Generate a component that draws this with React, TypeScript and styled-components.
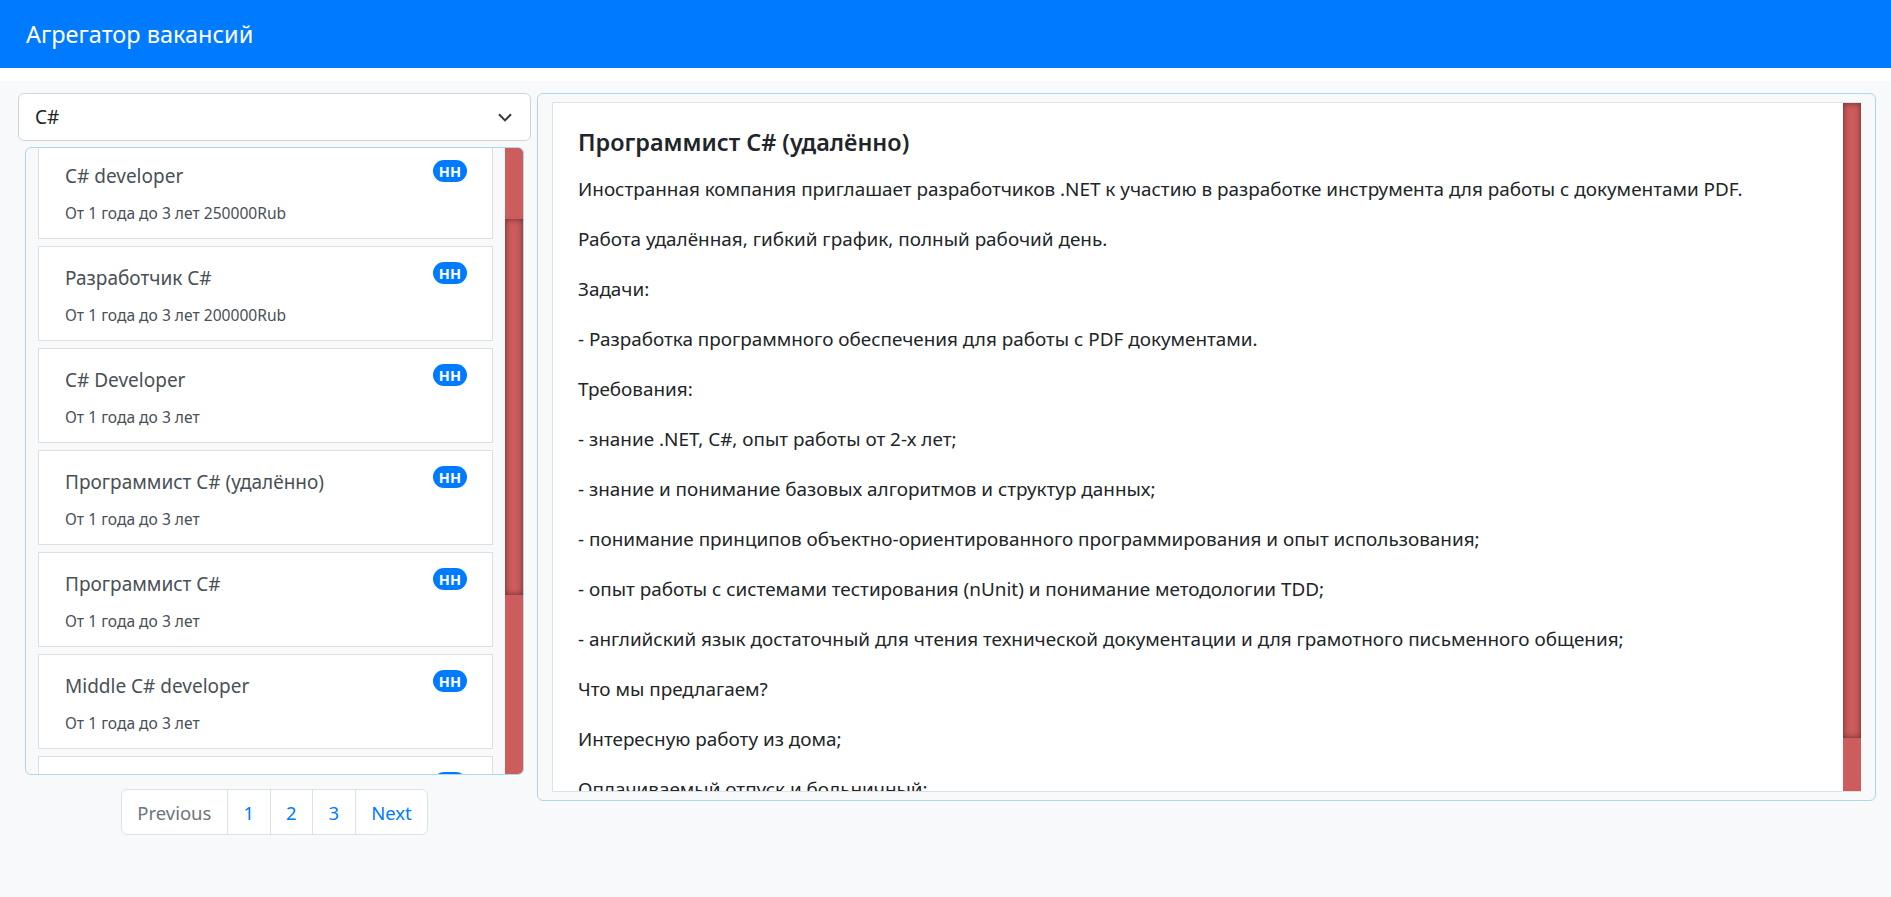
import React, { useEffect, useRef } from 'react';
import styled, { createGlobalStyle } from 'styled-components';

interface Vacancy {
  name: string;
  details: string;
}

const vacancies: Vacancy[] = [
  { name: 'Senior C# developer', details: 'От 3 до 6 лет 300000Rub' },
  { name: 'C# developer', details: 'От 1 года до 3 лет 250000Rub' },
  { name: 'Разработчик C#', details: 'От 1 года до 3 лет 200000Rub' },
  { name: 'C# Developer', details: 'От 1 года до 3 лет' },
  { name: 'Программист C# (удалённо)', details: 'От 1 года до 3 лет' },
  { name: 'Программист C#', details: 'От 1 года до 3 лет' },
  { name: 'Middle C# developer', details: 'От 1 года до 3 лет' },
  { name: '.NET разработчик', details: 'От 1 года до 3 лет' },
  { name: 'Backend C# developer', details: 'От 1 года до 3 лет' },
  { name: 'Junior C# developer', details: 'Нет опыта' },
];

const description: string[] = [
  'Иностранная компания приглашает разработчиков .NET к участию в разработке инструмента для работы с документами PDF.',
  'Работа удалённая, гибкий график, полный рабочий день.',
  'Задачи:',
  '- Разработка программного обеспечения для работы с PDF документами.',
  'Требования:',
  '- знание .NET, C#, опыт работы от 2-х лет;',
  '- знание и понимание базовых алгоритмов и структур данных;',
  '- понимание принципов объектно-ориентированного программирования и опыт использования;',
  '- опыт работы с системами тестирования (nUnit) и понимание методологии TDD;',
  '- английский язык достаточный для чтения технической документации и для грамотного письменного общения;',
  'Что мы предлагаем?',
  'Интересную работу из дома;',
  'Оплачиваемый отпуск и больничный;',
  'Возможность профессионального роста.',
];

const pages = ['Previous', '1', '2', '3', 'Next'];

const App = () => {
  const listRef = useRef<HTMLDivElement>(null);

  useEffect(() => {
    // the list is shown scrolled down by a bit more than one card
    if (listRef.current) listRef.current.scrollTop = 114;
  }, []);

  return (
    <>
      <GlobalStyle />
      <Navbar>
        <Brand>Агрегатор вакансий</Brand>
      </Navbar>
      <Main>
        <LeftColumn>
          <Select>
            <SelectText>C#</SelectText>
            <svg width="14" height="9" viewBox="0 0 14 9">
              <path d="M1 1.2 L7 7.4 L13 1.2" fill="none" stroke="#343a40" strokeWidth="2" />
            </svg>
          </Select>
          <List>
            <ListViewport ref={listRef}>
              {vacancies.map((v, i) => (
                <Card key={i}>
                  <CardHeader>
                    <CardTitle>{v.name}</CardTitle>
                    <Badge>HH</Badge>
                  </CardHeader>
                  <CardDetails>{v.details}</CardDetails>
                </Card>
              ))}
            </ListViewport>
            <ScrollTrack>
              <ScrollThumb $offset={71} $size={376} />
            </ScrollTrack>
          </List>
          <Pager>
            {pages.map((p, i) => (
              <PageItem key={p} $muted={p === 'Previous'} $first={i === 0} $last={i === pages.length - 1}>
                {p}
              </PageItem>
            ))}
          </Pager>
        </LeftColumn>
        <DetailsOuter>
          <DetailsCard>
            <DetailsBody>
              <DetailsTitle>Программист C# (удалённо)</DetailsTitle>
              {description.map((line, i) => (
                <Paragraph key={i}>{line}</Paragraph>
              ))}
            </DetailsBody>
            <ScrollTrack>
              <ScrollThumb $offset={0} $size={635} />
            </ScrollTrack>
          </DetailsCard>
        </DetailsOuter>
      </Main>
    </>
  );
};

const GlobalStyle = createGlobalStyle`
  html, body {
    margin: 0;
    padding: 0;
    background: #fff;
    font-family: "Noto Sans", "Open Sans", sans-serif;
  }
`;

const Navbar = styled.header`
  height: 68px;
  background: #007bff;
  display: flex;
  align-items: center;
  padding: 0 26px;
`;

const Brand = styled.div`
  color: #fff;
  font-size: 23.5px;
`;

const Main = styled.main`
  margin-top: 13px;
  background: #f8f9fa;
  min-height: calc(100vh - 81px);
  box-sizing: border-box;
  padding: 12px 15px 0 18px;
  display: flex;
  gap: 6px;
  align-items: flex-start;
`;

const LeftColumn = styled.div`
  width: 513px;
  flex-shrink: 0;
  display: flex;
  flex-direction: column;
`;

const Select = styled.div`
  height: 48px;
  box-sizing: border-box;
  border: 1px solid #ced4da;
  border-radius: 6px;
  background: #fff;
  display: flex;
  align-items: center;
  justify-content: space-between;
  padding: 0 18px 0 16px;
`;

const SelectText = styled.span`
  font-size: 19px;
  color: #212529;
`;

const List = styled.div`
  margin: 6px 7px 0;
  height: 628px;
  box-sizing: border-box;
  border: 1px solid #add8e6;
  border-radius: 6px;
  overflow: hidden;
  display: flex;
`;

const ListViewport = styled.div`
  flex: 1;
  overflow: hidden;
  padding: 8px 12px;
  display: flex;
  flex-direction: column;
  gap: 7px;
`;

const ScrollTrack = styled.div`
  width: 18px;
  flex-shrink: 0;
  background: #cd5c5c;
  display: flex;
  flex-direction: column;
`;

const ScrollThumb = styled.div<{ $offset: number; $size: number }>`
  margin-top: ${({ $offset }) => $offset}px;
  height: ${({ $size }) => $size}px;
  background: #cd5c5c;
  box-shadow: inset 0 0 6px rgba(0, 0, 0, 0.55);
`;

const Card = styled.div`
  flex-shrink: 0;
  height: 95px;
  box-sizing: border-box;
  background: #fff;
  border: 1px solid #dfdfdf;
  padding: 15px 25px 0 26px;
`;

const CardHeader = styled.div`
  display: flex;
  justify-content: space-between;
  align-items: flex-start;
`;

const CardTitle = styled.div`
  font-size: 19px;
  line-height: 32px;
  color: #495057;
`;

const Badge = styled.span`
  background: #007bff;
  color: #fff;
  font-size: 14.5px;
  font-weight: 700;
  line-height: 22px;
  padding: 0 6px;
  border-radius: 11px;
`;

const CardDetails = styled.div`
  margin-top: 10px;
  font-size: 15.6px;
  line-height: 22px;
  color: #495057;
`;

const Pager = styled.nav`
  margin-top: 14px;
  display: flex;
  justify-content: center;
`;

const PageItem = styled.span<{ $muted: boolean; $first: boolean; $last: boolean }>`
  height: 46px;
  box-sizing: border-box;
  display: flex;
  align-items: center;
  padding: 0 15.5px;
  background: #fff;
  border: 1px solid #dee2e6;
  margin-left: ${({ $first }) => ($first ? '0' : '-1px')};
  border-radius: ${({ $first, $last }) => ($first ? '6px 0 0 6px' : $last ? '0 6px 6px 0' : '0')};
  font-size: 18.5px;
  color: ${({ $muted }) => ($muted ? '#6c757d' : '#007bff')};
`;

const DetailsOuter = styled.section`
  flex: 1;
  height: 708px;
  box-sizing: border-box;
  border: 1px solid #add8e6;
  border-radius: 6px;
  padding: 8px 14px;
`;

const DetailsCard = styled.article`
  height: 100%;
  box-sizing: border-box;
  background: #fff;
  border: 1px solid #dee2e6;
  border-right: none;
  display: flex;
`;

const DetailsBody = styled.div`
  flex: 1;
  overflow: hidden;
  padding: 25px 25px 0;
  color: #212529;
`;

const DetailsTitle = styled.h2`
  margin: 0 0 17px;
  font-size: 23.4px;
  line-height: 29px;
  font-weight: 600;
`;

const Paragraph = styled.p`
  margin: 0 0 20px;
  font-size: 18.9px;
  line-height: 30px;
`;

export default App;
